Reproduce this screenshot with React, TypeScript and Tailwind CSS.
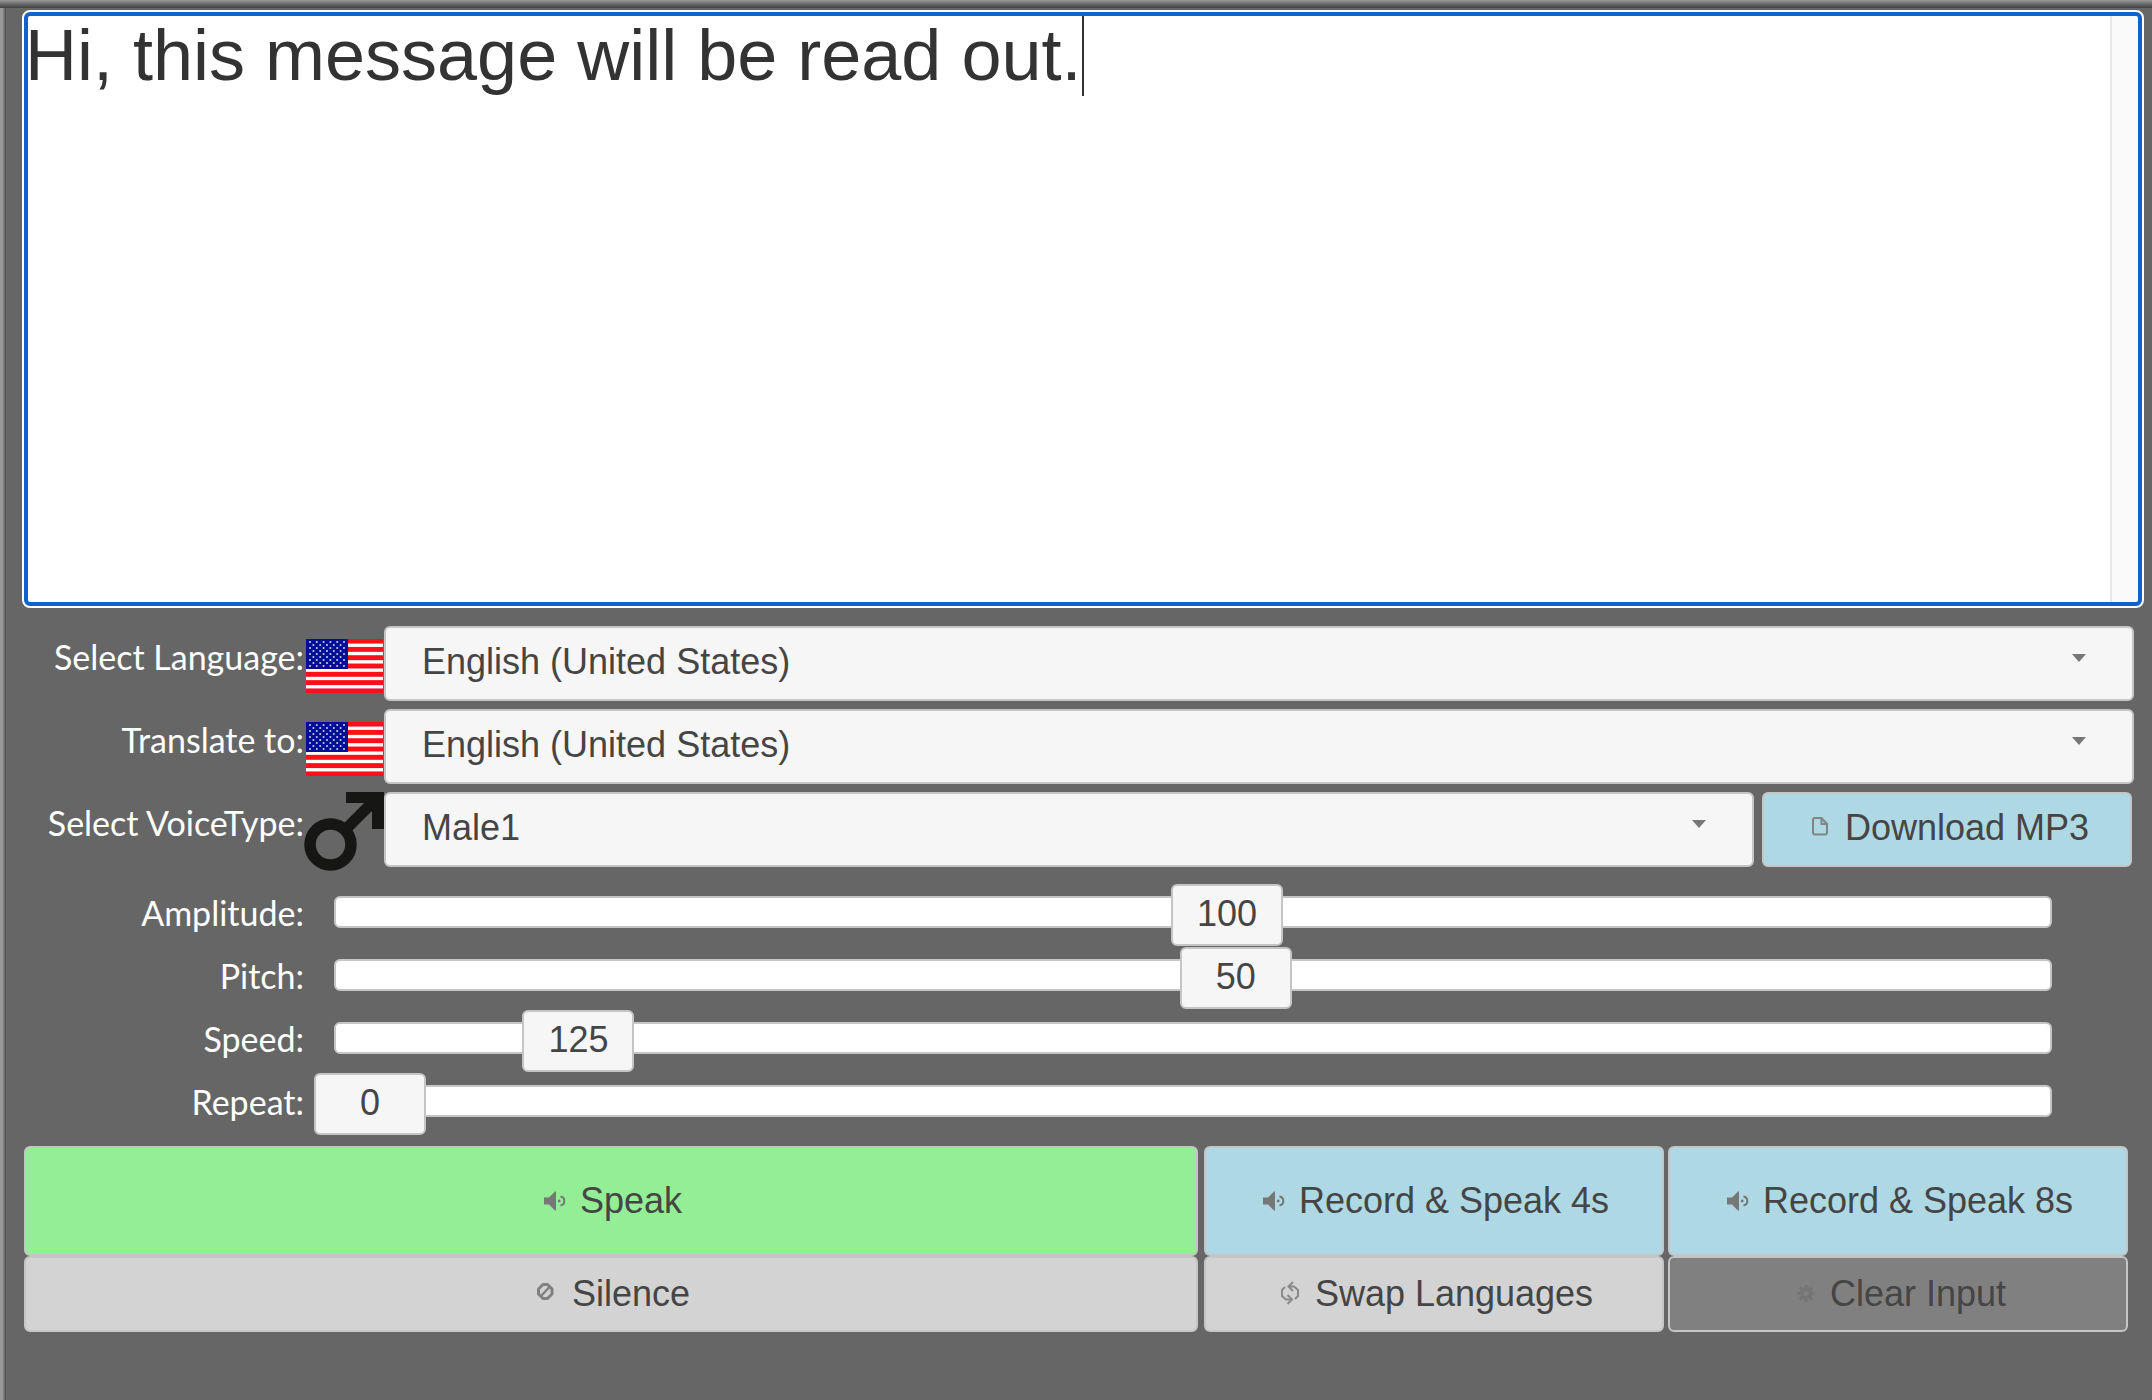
import { useState } from "react";
import type { ReactNode } from "react";

const languages = ["English (United States)", "English (United Kingdom)", "Deutsch", "Français", "Español"];
const voices = ["Male1", "Male2", "Female1", "Female2"];

function UsFlag() {
  const redStripes = Array.from({ length: 7 }, (_, i) => i * 2);
  const stars = Array.from({ length: 9 }, (_, r) =>
    Array.from({ length: r % 2 ? 5 : 6 }, (_, c) => ({ x: (r % 2 ? 7.4 : 4) + c * 6.8, y: 3 + r * 3 })),
  ).flat();
  return (
    <svg viewBox="0 0 77 54" className="mt-[13px] h-[54px] w-[77px]" aria-hidden="true">
      <rect width="77" height="54" fill="#fff" />
      {redStripes.map((i) => (
        <rect key={i} y={(i * 54) / 13 - 0.4} width="77" height={54 / 13 + 0.8} fill="#ff1018" />
      ))}
      <rect width="42" height="30" fill="#000f94" />
      {stars.map((s, i) => (
        <circle key={i} cx={s.x} cy={s.y} r="1.05" fill="#c4c8ea" />
      ))}
    </svg>
  );
}

function MaleSign() {
  return (
    <svg viewBox="0 0 80 80" className="h-20 w-20" fill="none" stroke="#161614" aria-hidden="true">
      <circle cx="26.5" cy="52.5" r="20.5" strokeWidth="11.5" />
      <path d="M44 35 L71 8" strokeWidth="11" />
      <path d="M42 0 H80 V37 H68 V20 L60 11 H42 Z" fill="#161614" stroke="none" />
    </svg>
  );
}

function SpeakerIcon() {
  return (
    <svg viewBox="0 0 32 32" className="size-8" fill="#777" aria-hidden="true">
      <path d="M4 12.500h5l6-6h1v19h-1l-6-6H4z" />
      <circle cx="19.200" cy="16" r="1.400" />
      <path d="M20.500 11.500q3.800 .6 3.800 4.500t-3.800 4.500" fill="none" stroke="#777" strokeWidth="2" />
    </svg>
  );
}

function DocumentIcon() {
  return (
    <svg viewBox="0 0 32 32" className="size-8" fill="none" stroke="#808486" strokeWidth="2" aria-hidden="true">
      <path d="M16.500 6H10q-2 0-2 2v12.500q0 2 2 2h10q2 0 2-2V12z" />
      <path d="M16.500 6v6h6" />
    </svg>
  );
}

function CancelIcon() {
  return (
    <svg viewBox="0 0 32 32" className="size-8" fill="none" stroke="#808080" strokeWidth="3" aria-hidden="true">
      <path d="M11 6.500h4.500L20 11v5l-4.500 4.500H11L6.500 16v-5z" strokeLinejoin="round" />
      <path d="M9 18l8.500-9" strokeWidth="2.500" />
    </svg>
  );
}

function SwapIcon() {
  return (
    <svg viewBox="0 0 32 32" className="size-8" fill="none" stroke="#8a8a8a" strokeWidth="2" aria-hidden="true">
      <path d="M13.500 8.500h5.500l4 3.500v6l-3 3" />
      <path d="M18 4l-4.500 4.500L18 13" />
      <path d="M17 21.500h-6l-4-3.500v-6l3-3" />
      <path d="M12.500 17l4.500 4.500-4.500 4.500" />
    </svg>
  );
}

function GearIcon() {
  return (
    <svg viewBox="0 0 32 32" className="size-8" fill="none" stroke="#757575" aria-hidden="true">
      <circle cx="16" cy="15.500" r="4.500" strokeWidth="4" />
      <circle cx="16" cy="15.500" r="7.400" strokeWidth="2.500" strokeDasharray="3 2.810" strokeDashoffset="1.500" />
    </svg>
  );
}

function Row({ id, label, children }: { id: string; label: string; children: ReactNode }) {
  return (
    <div className="flex h-[75px]">
      <label htmlFor={id} className="w-[282px] shrink-0 pt-2 text-right font-['Lato'] text-[34px] leading-[46px] text-white">
        {label}
      </label>
      {children}
    </div>
  );
}

function Dropdown({ id, options }: { id: string; options: string[] }) {
  return (
    <div className="relative min-w-0 flex-1">
      <select
        id={id}
        className="h-full w-full appearance-none rounded-md border-2 border-[#c5c5c5] bg-[#f6f6f6] pr-24 pb-1 pl-9 text-4xl text-[#454545]"
      >
        {options.map((o) => (
          <option key={o}>{o}</option>
        ))}
      </select>
      <svg viewBox="0 0 14 8" className="pointer-events-none absolute top-7 right-12 h-2 w-3.5" aria-hidden="true">
        <path d="M0 0h14L7 8z" fill="#777" />
      </svg>
    </div>
  );
}

type SliderProps = { id: string; label: string; min: number; max: number; initial: number };

function Slider({ id, label, min, max, initial }: SliderProps) {
  const [value, setValue] = useState(initial);
  return (
    <div className="flex h-[62px] items-start">
      <label htmlFor={id} className="w-[282px] shrink-0 pt-1.5 text-right font-['Lato'] text-[34px] leading-[46px] text-white">
        {label}
      </label>
      <div className="relative mt-3 mr-[82px] ml-[30px] h-8 flex-1 rounded-md border-2 border-[#c5c5c5] bg-white">
        <input
          id={id}
          type="range"
          min={min}
          max={max}
          value={value}
          onChange={(e) => setValue(Number(e.target.value))}
          className="absolute inset-0 h-full w-full cursor-pointer opacity-0"
        />
        <output
          htmlFor={id}
          className="pointer-events-none absolute -top-3.5 -ml-[22px] flex h-[62px] w-28 items-center justify-center rounded-md border-2 border-[#c5c5c5] bg-[#f6f6f6] pb-0.5 text-4xl text-[#454545]"
          style={{ left: `${((value - min) / (max - min)) * 100}%` }}
        >
          {value}
        </output>
      </div>
    </div>
  );
}

function ActionButton({ className, icon, children }: { className: string; icon: ReactNode; children: ReactNode }) {
  return (
    <button
      type="button"
      className={
        "flex items-center justify-center gap-2 rounded-md border-2 border-[#c5c5c5] text-4xl whitespace-nowrap text-[#454545] " +
        className
      }
    >
      {icon}
      {children}
    </button>
  );
}

export default function App() {
  return (
    <div className="flex min-h-screen flex-col bg-[#666] font-['Liberation_Sans',Arial,sans-serif]">
      <div className="h-2 bg-linear-to-b from-[#999] to-[#404040]" />
      <div className="flex flex-1">
        <div className="w-1.5 bg-linear-to-r from-[#999] from-40% to-[#4c4c4c]" />
        <form className="min-w-0 flex-1 pt-0.5 pr-2 pl-4" onSubmit={(e) => e.preventDefault()}>
          <div className="relative flex h-[598px] rounded-lg border-2 border-white bg-white after:pointer-events-none after:absolute after:inset-0 after:rounded-md after:border-4 after:border-[#1062cf]">
            <textarea
              aria-label="Message"
              defaultValue="Hi, this message will be read out."
              className="min-w-0 flex-1 resize-none rounded-l-md bg-white pt-[3px] pl-px text-7xl leading-[80px] text-[#333] caret-transparent outline-none"
            />
            <div className="w-8 rounded-r-md border-l-2 border-[#e8e8e8] bg-[#fafafa]" />
            <div className="pointer-events-none absolute top-1 left-0.5 flex text-7xl leading-[80px]" aria-hidden="true">
              <span className="invisible">Hi, this message will be read out.</span>
              <span className="h-20 w-0.5 bg-[#333]" />
            </div>
          </div>

          <div className="mt-[18px] mr-2.5 flex flex-col gap-2">
            <Row id="language" label="Select Language:">
              <div className="w-20 shrink-0 pl-0.5"><UsFlag /></div>
              <Dropdown id="language" options={languages} />
            </Row>
            <Row id="translate" label="Translate to:">
              <div className="w-20 shrink-0 pl-0.5"><UsFlag /></div>
              <Dropdown id="translate" options={languages} />
            </Row>
            <Row id="voice" label="Select VoiceType:">
              <div className="w-20 shrink-0"><MaleSign /></div>
              <Dropdown id="voice" options={voices} />
              <ActionButton className="mr-0.5 ml-2 w-[370px] bg-[#aed8e3] pb-1" icon={<DocumentIcon />}>
                Download MP3
              </ActionButton>
            </Row>
          </div>

          <div className="mt-[17px] mr-2.5 flex flex-col gap-px">
            <Slider id="amplitude" label="Amplitude:" min={0} max={200} initial={100} />
            <Slider id="pitch" label="Pitch:" min={0} max={99} initial={50} />
            <Slider id="speed" label="Speed:" min={80} max={450} initial={125} />
            <Slider id="repeat" label="Repeat:" min={0} max={100} initial={0} />
          </div>

          <div className="mt-[11px] mr-4 ml-0.5 grid grid-cols-[1176fr_460fr_460fr] grid-rows-[110px_76px] gap-x-1">
            <ActionButton className="mr-0.5 bg-[#93ee95]" icon={<SpeakerIcon />}>Speak</ActionButton>
            <ActionButton className="bg-[#aed8e3]" icon={<SpeakerIcon />}>Record &amp; Speak 4s</ActionButton>
            <ActionButton className="bg-[#aed8e3]" icon={<SpeakerIcon />}>Record &amp; Speak 8s</ActionButton>
            <ActionButton className="mr-0.5 bg-[#d3d3d3]" icon={<CancelIcon />}>Silence</ActionButton>
            <ActionButton className="bg-[#d3d3d3]" icon={<SwapIcon />}>Swap Languages</ActionButton>
            <ActionButton className="bg-[#808080]" icon={<GearIcon />}>Clear Input</ActionButton>
          </div>
        </form>
      </div>
    </div>
  );
}
